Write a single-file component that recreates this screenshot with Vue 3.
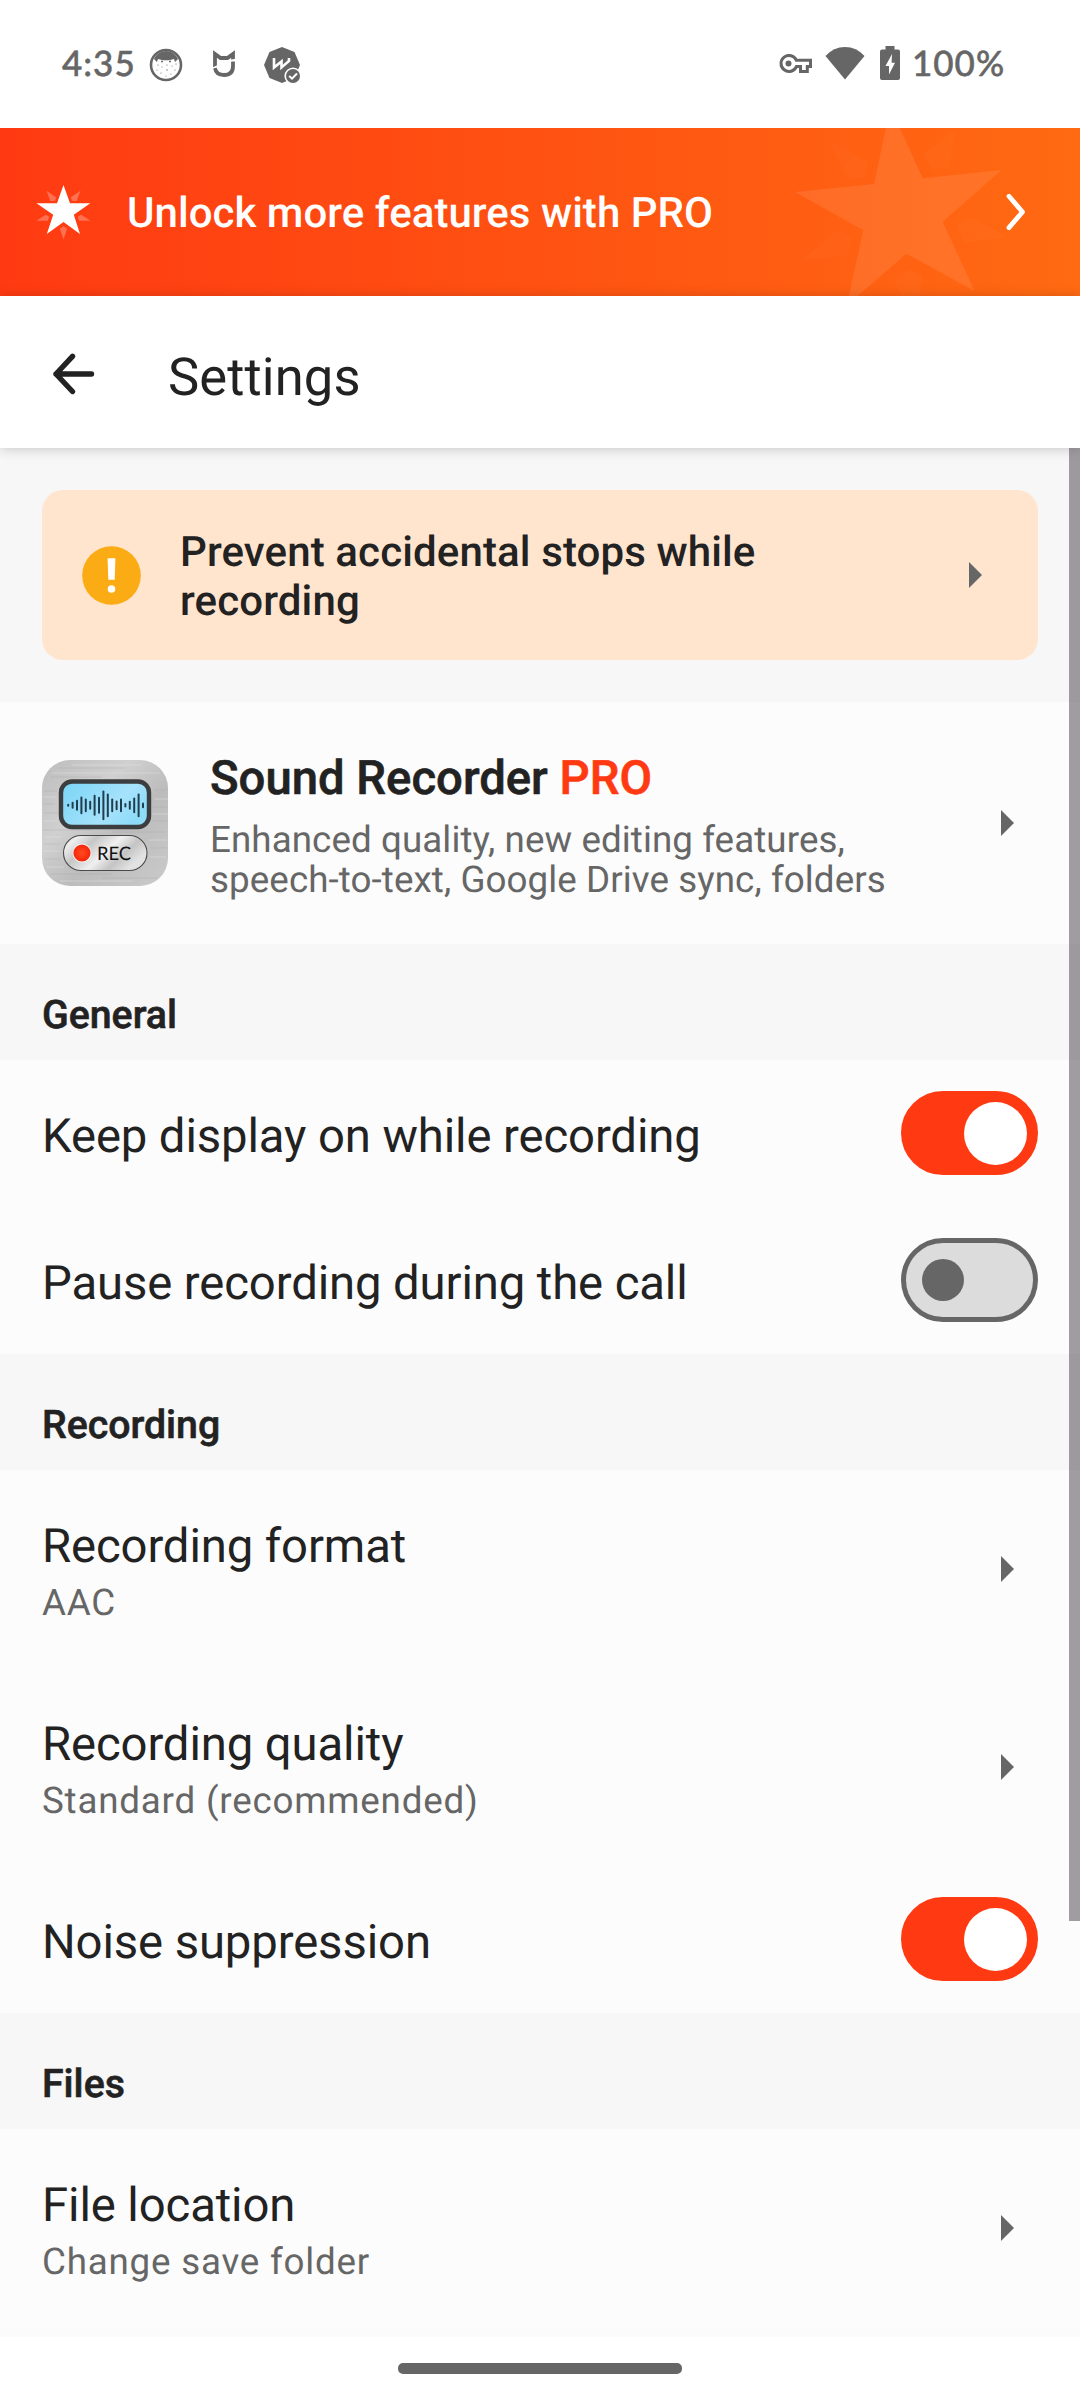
<script setup>
const sections = [
  {
    name: 'General',
    rows: [
      { title: 'Keep display on while recording', toggle: true, on: true },
      { title: 'Pause recording during the call', toggle: true, on: false },
    ],
  },
  {
    name: 'Recording',
    rows: [
      { title: 'Recording format', sub: 'AAC' },
      { title: 'Recording quality', sub: 'Standard (recommended)' },
      { title: 'Noise suppression', toggle: true, on: true },
    ],
  },
  {
    name: 'Files',
    rows: [{ title: 'File location', sub: 'Change save folder' }],
  },
]

// half-heights of the waveform bars on the recorder display
const wave = [1.3, 3.3, 5.3, 8.7, 6.7, 4.3, 10.3, 8.3, 14.7, 11.7, 6.7, 4.7, 6.7, 2, 4.3, 7.7, 11.7, 2.7]
</script>

<template>
  <div class="screen">
    <div class="status">
      <span class="clock">4:35</span>
      <svg class="s-face" width="34" height="34" viewBox="0 0 34 34">
        <circle cx="17" cy="17" r="15" fill="#fff" stroke="#666" stroke-width="2.6" />
        <path d="M5 11 Q9 3 17 3 T29 11 L26 14 L25 11 L21 12 Q17 12.500 13 12 L9 11 L8 14 Z" fill="#666" />
        <g fill="#666">
          <circle cx="9" cy="17" r=".6" /><circle cx="13" cy="19" r=".5" /><circle cx="18" cy="17" r=".6" />
          <circle cx="23" cy="18" r=".5" /><circle cx="27" cy="16" r=".6" /><circle cx="8" cy="22" r=".5" />
          <circle cx="12" cy="25" r=".6" /><circle cx="18" cy="22" r=".7" /><circle cx="22" cy="26" r=".5" />
          <circle cx="26" cy="22" r=".6" /><circle cx="17" cy="28" r=".5" /><circle cx="13" cy="13.500" r="1" />
          <circle cx="21" cy="13.500" r="1" />
        </g>
      </svg>
      <svg class="s-mi" width="24" height="28" viewBox="0 0 24 28" fill="none" stroke="#666" stroke-width="3.8">
        <path d="M3 17 V4 L8.500 8 H15.500 L21 4 V9.500" />
        <path d="M1.200 1 L9 6.200 H15 L22.800 1 L21 6 L16 9 H8 L3 6 Z" fill="#666" stroke="none" />
        <path d="M3 18 Q4 25 12 25 Q21 25 21 16 V11.500" />
        <path d="M0 18.500 L6 15.500 M17 11.500 L24 9.200" stroke="#fff" stroke-width="1.300" />
      </svg>
      <svg class="s-w" width="38" height="38" viewBox="0 0 38 38">
        <path d="M19 1 L31.500 6 L37 19 L31.500 32 L19 37 L6.500 32 L1 19 L6.500 6 Z" fill="#666" />
        <path d="M11 12 V21.500 L18.500 15.500 V21.500 L26 15 V12" fill="none" stroke="#fff" stroke-width="2.600" />
        <circle cx="30" cy="30" r="8.600" fill="#fff" />
        <circle cx="30" cy="30" r="7" fill="#666" />
        <path d="M26.200 30 L29 32.700 L34 27.500" fill="none" stroke="#fff" stroke-width="2" />
      </svg>
      <span class="grow"></span>
      <svg class="s-key" width="34" height="20" viewBox="0 0 34 20">
        <path d="M17.400 6.300 H31.500 V12.600 H28.300 V17.400 H21.500 V12.600 H17.400 A8 8 0 1 1 17.400 6.300 Z" fill="none" stroke="#666" stroke-width="3" />
        <circle cx="9.500" cy="9.500" r="3" fill="#666" />
      </svg>
      <svg class="s-wifi" width="40" height="34" viewBox="0 0 40 34">
        <path d="M20 33.500 L0.500 10 Q8.500 1 20 1 T39.500 10 Z" fill="#666" />
      </svg>
      <svg class="s-bat" width="20" height="34" viewBox="0 0 20 34">
        <path d="M5.500 0 H14.500 V3.500 H18 Q20 3.500 20 5.500 V32 Q20 34 18 34 H2 Q0 34 0 32 V5.500 Q0 3.500 2 3.500 H5.500 Z" fill="#666" />
        <path d="M12 8 L5.500 20 H9 V28.500 L15 16.800 H11.600 Z" fill="#fff" />
      </svg>
      <span class="pct">100%</span>
    </div>

    <div class="banner">
      <svg class="big-star" width="340" height="168" viewBox="0 24 1020 504" fill="#fff">
        <path opacity=".09" d="M451 -37 L548 175 L785 150 L608 305 L704 514 L499 401 L320 557 L370 331 L165 216 L402 192 Z" />
        <path opacity=".025" d="M268 64 L385 125 L374 171 L324 176 Z M648 28 L551 103 L576 148 L627 142 Z M690 290 L805 352 L672 367 L648 318 Z M290 331 L333 352 L322 406 L190 420 Z M508 448 L549 470 L536 540 L488 540 L464 484 Z" />
      </svg>
      <svg class="star" width="55" height="56" viewBox="0 0 55 56" fill="#fff">
        <path d="M27.500 1 L34 19.300 H54.300 L37.800 30.700 L44 50 L27.500 38 L10.800 50 L17.200 30.700 L.5 19.300 H21 Z" />
        <path opacity=".27" d="M10.500 6.700 L20.100 13.300 L19.100 17 H14.300 Z M44.500 6.700 L34.900 13.300 L35.900 17 H40.700 Z M.5 36.700 L9.800 30.700 L13.200 32.700 L11.900 36.700 Z M54.500 36.700 L45.200 30.700 L41.800 32.700 L43.100 36.700 Z M27.500 55.300 L23.900 44.700 L27.500 42.300 L31.100 44.700 Z" />
      </svg>
      <span class="banner-text">Unlock more features with PRO</span>
      <svg width="20" height="38" viewBox="0 0 20 38" fill="none" stroke="#fff" stroke-width="4.800" stroke-linecap="round" stroke-linejoin="round">
        <path d="M3 3.200 L16.500 19 L3 34.600" />
      </svg>
    </div>

    <div class="header">
      <svg width="42" height="42" viewBox="0 0 42 42" fill="none" stroke="#222" stroke-width="5.400" stroke-linecap="round" stroke-linejoin="round">
        <path d="M3 21 H38.500 M19.500 3.300 L3 21 L19.500 38.500" />
      </svg>
      <h1>Settings</h1>
    </div>

    <div class="list">
      <div class="scrollbar"></div>
      <div class="notice">
        <svg width="59" height="59" viewBox="0 0 59 59">
          <circle cx="29.500" cy="29.500" r="29.300" fill="#fbac14" />
          <path d="M25.600 12.200 H33.400 L32.700 33.700 H26.300 Z" fill="#fff" />
          <circle cx="29.500" cy="43" r="3.800" fill="#fff" />
        </svg>
        <div class="notice-text">Prevent accidental stops while<br />recording</div>
        <i class="tri"></i>
      </div>

      <div class="promo">
        <svg class="app-icon" width="126" height="126" viewBox="0 0 126 126">
          <defs>
            <linearGradient id="metal" x1="0" y1="0" x2="1" y2="1">
              <stop offset="0" stop-color="#bdbdbd" /><stop offset=".35" stop-color="#d0d0d0" />
              <stop offset=".6" stop-color="#bcbcbc" /><stop offset="1" stop-color="#cacaca" />
            </linearGradient>
            <linearGradient id="lcd" x1="0" y1="0" x2="1" y2=".5">
              <stop offset="0" stop-color="#78d4f6" /><stop offset=".7" stop-color="#a6e2fb" />
              <stop offset="1" stop-color="#8fdcf9" />
            </linearGradient>
            <linearGradient id="key" x1="0" y1="0" x2="1" y2=".45">
              <stop offset="0" stop-color="#bfbfbf" /><stop offset=".15" stop-color="#eee" />
              <stop offset=".35" stop-color="#c6c6c6" /><stop offset=".6" stop-color="#f0f0f0" />
              <stop offset=".8" stop-color="#c4c4c4" /><stop offset="1" stop-color="#e2e2e2" />
            </linearGradient>
            <radialGradient id="dot"><stop offset="0" stop-color="#ff4a20" /><stop offset="1" stop-color="#f5260a" /></radialGradient>
          </defs>
          <rect width="126" height="126" rx="28" fill="url(#metal)" />
          <g stroke="#a9a9a9" stroke-width=".7" opacity=".5">
            <path d="M16 8 H84 M8 17 H60 M2 31 H15 M1 44 H13 M2 53 H16 M112 30 H125 M110 47 H125 M111 61 H126 M1 70 H50 M70 72 H124 M2 84 H18 M108 88 H125 M3 99 H19 M7 114 H70 M60 118 H116" />
          </g>
          <g stroke="#e4e4e4" stroke-width=".7" opacity=".7">
            <path d="M30 5 H100 M10 13 H118 M1 37 H15 M112 39 H126 M1 61 H15 M110 54 H126 M2 77 H20 M107 80 H125 M1 91 H18 M108 97 H124 M5 107 H22 M18 121 H90" />
          </g>
          <rect x="19" y="21.500" width="88" height="45.500" rx="11" fill="url(#lcd)" stroke="#3c3d3f" stroke-width="4.400" />
          <g stroke="#1f3f50" stroke-width="2" stroke-linecap="round">
            <line v-for="(h, i) in wave" :key="i" :x1="26.2 + i * 4.4" :x2="26.2 + i * 4.4" :y1="45.300 - h + .8" :y2="45.300 + h - .8" />
          </g>
          <rect x="21.500" y="75.500" width="83.500" height="35" rx="17.500" fill="url(#key)" stroke="#4a4a4a" stroke-width="1.100" />
          <circle cx="40" cy="93" r="9.400" fill="#fff" opacity=".8" />
          <circle cx="40" cy="93" r="8.600" fill="url(#dot)" />
          <text x="55" y="100" font-family="Lato, sans-serif" font-size="18.500" fill="#111" textLength="34">REC</text>
        </svg>
        <div class="promo-text">
          <div class="promo-title">Sound Recorder <b>PRO</b></div>
          <div class="promo-sub">Enhanced quality, new editing features,<br />speech-to-text, Google Drive sync, folders</div>
        </div>
        <i class="tri"></i>
      </div>

      <section v-for="s in sections" :key="s.name">
        <h2>{{ s.name }}</h2>
        <div v-for="r in s.rows" :key="r.title" class="row" :class="{ tall: r.sub }">
          <div class="labels">
            <div class="title">{{ r.title }}</div>
            <div v-if="r.sub" class="sub">{{ r.sub }}</div>
          </div>
          <div v-if="r.toggle" class="toggle" :class="{ on: r.on }"><span></span></div>
          <i v-else class="tri"></i>
        </div>
      </section>
    </div>

    <div class="nav"><span></span></div>
  </div>
</template>

<style>
body {
  background: #fff;
}
</style>

<style scoped>
.screen {
  width: 1080px;
  height: 2400px;
  display: flex;
  flex-direction: column;
  overflow: hidden;
  background: #fff;
  color: #222;
  font-family: Roboto, sans-serif;
  text-rendering: geometricPrecision;
}
.screen * {
  box-sizing: border-box;
}
svg {
  display: block;
  flex: none;
}
.status {
  height: 128px;
  flex: none;
  display: flex;
  align-items: center;
  padding: 0 76px 0 62px;
  color: #666;
  font: 500 35px/42px Lato, sans-serif;
  -webkit-text-stroke: 0.5px #666;
}
.clock {
  width: 87px;
  margin-top: -3px;
  letter-spacing: 1px;
}
.s-face {
  margin-top: 2px;
}
.s-mi {
  margin-left: 29px;
}
.s-w {
  margin: 2px 0 0 27px;
}
.grow {
  flex: 1;
}
.s-wifi {
  margin: -2px 0 0 12px;
}
.s-bat {
  margin: -2px 12px 0 15px;
}
.pct {
  width: 92px;
  margin-top: -3px;
  letter-spacing: 1px;
}
.banner {
  height: 168px;
  flex: none;
  position: relative;
  overflow: hidden;
  display: flex;
  align-items: center;
  padding: 0 54px 0 36px;
  background: linear-gradient(90deg, #ff3a12, #ff6a12);
}
.big-star {
  position: absolute;
  right: 0;
  top: 0;
}
.banner-text {
  flex: 1;
  margin: 4px 0 0 36px;
  color: #fff;
  font-size: 42px;
  font-weight: 500;
  line-height: 50px;
  letter-spacing: 0.03px;
}
.header {
  height: 152px;
  flex: none;
  position: relative;
  z-index: 1;
  display: flex;
  align-items: center;
  padding: 4px 53px 0;
  background: #fff;
  box-shadow: 0 1px 12px rgba(0, 0, 0, 0.2);
}
h1 {
  margin: 5px 0 0 73px;
  font-size: 52.5px;
  font-weight: 400;
  line-height: 60px;
  letter-spacing: 0.12px;
}
.list {
  height: 1889px;
  flex: none;
  position: relative;
  overflow: hidden;
  padding-top: 42px;
  background: linear-gradient(#f7f7f7 1800px, #fbfbfb 1800px);
}
.scrollbar {
  position: absolute;
  z-index: 1;
  right: 0;
  top: 0;
  width: 11px;
  height: 1473px;
  background: rgba(67, 60, 71, 0.5);
}
.notice {
  height: 170px;
  margin: 0 42px 42px;
  padding: 0 56px 0 39.5px;
  display: flex;
  align-items: center;
  border-radius: 21px;
  background: #ffe4ce;
}
.notice-text {
  flex: 1;
  margin: 4px 0 0 39.5px;
  font-size: 42px;
  font-weight: 500;
  line-height: 49px;
  letter-spacing: 0.12px;
}
.tri {
  flex: none;
  width: 13px;
  height: 26px;
  background: #666;
  clip-path: polygon(0 0, 100% 50%, 0 100%);
}
.promo {
  height: 242px;
  display: flex;
  align-items: center;
  padding: 0 66px 0 42px;
  background: #fcfcfc;
}
.promo-text {
  flex: 1;
  margin-left: 42px;
}
.promo-title {
  margin-top: 5px;
  font-size: 47.25px;
  font-weight: 500;
  line-height: 54px;
  -webkit-text-stroke: 0.6px currentColor;
}
.promo-title b {
  font-weight: 500;
  color: #ff3a12;
}
.promo-sub {
  margin-top: 15px;
  font-size: 36.75px;
  line-height: 40.4px;
  letter-spacing: 0.08px;
  color: #666;
}
h2 {
  margin: 0;
  height: 116px;
  padding: 26px 42px 0;
  font-size: 39.25px;
  font-weight: 500;
  line-height: 90px;
  -webkit-text-stroke: 0.6px currentColor;
}
.row {
  height: 147px;
  display: flex;
  align-items: center;
  padding: 0 42px;
  background: #fcfcfc;
}
.tall {
  height: 198px;
  padding-right: 66px;
}
.labels {
  flex: 1;
  align-self: flex-start;
  padding-top: 48px;
}
.title {
  font-size: 47.25px;
  line-height: 56px;
  letter-spacing: -0.11px;
}
.sub {
  margin-top: 1px;
  font-size: 36.75px;
  line-height: 56px;
  letter-spacing: 0.79px;
  color: #666;
}
.toggle {
  width: 137px;
  height: 84px;
  margin-top: -1px;
  display: flex;
  align-items: center;
  padding-left: 16px;
  border: 5px solid #666;
  border-radius: 42px;
  background: #dcdcdc;
}
.toggle.on {
  padding: 0 5px 0 58px;
  border-color: #ff3a12;
  background: #ff3a12;
}
.toggle span {
  width: 42px;
  height: 42px;
  border-radius: 50%;
  background: #666;
}
.toggle.on span {
  width: 63px;
  height: 63px;
  background: #fff;
}
.nav {
  height: 63px;
  flex: none;
  display: flex;
  justify-content: center;
  padding-top: 26px;
}
.nav span {
  width: 284px;
  height: 11px;
  border-radius: 5px;
  background: #666;
}
</style>
